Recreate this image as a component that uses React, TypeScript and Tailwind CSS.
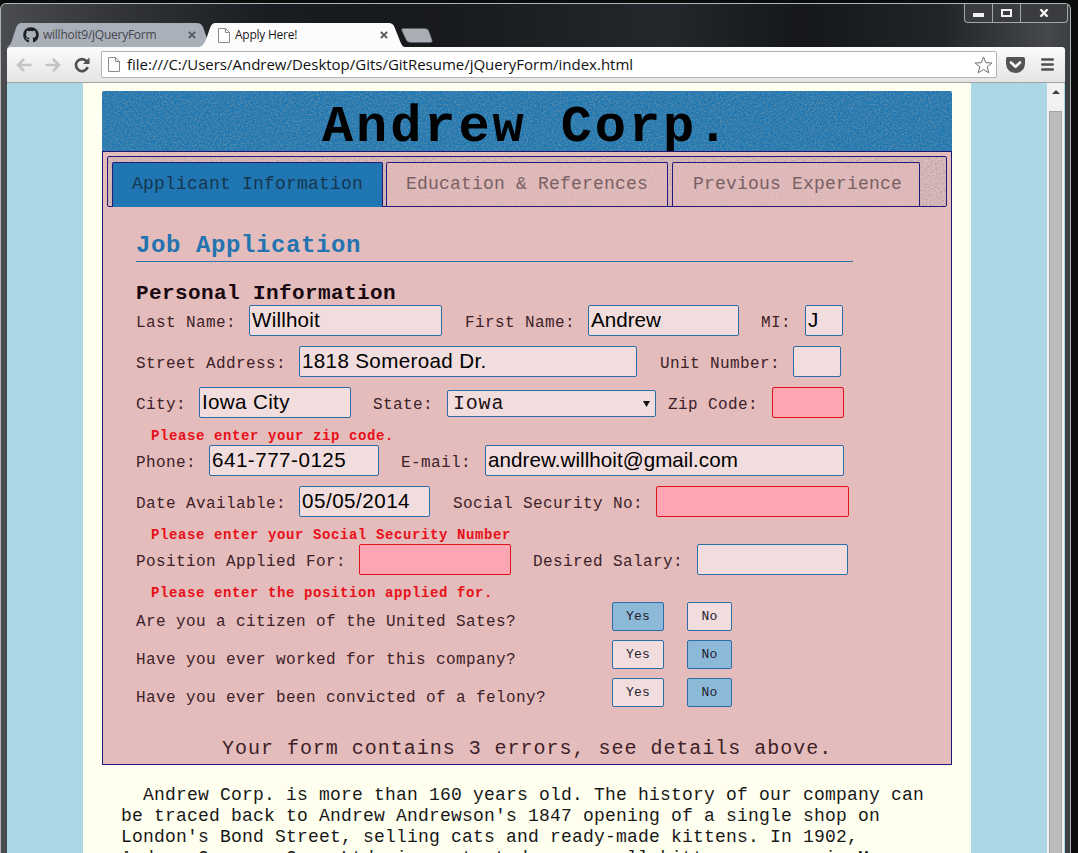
import React from "react";
import { FaGithub } from "react-icons/fa";

const mono = "font-['Liberation_Mono','Courier_New',monospace]";
const ui = "font-['Open_Sans','Noto_Sans',sans-serif]";

function Grain({ id, tone, opacity }: { id: string; tone: string; opacity: number }) {
  return (
    <svg className="pointer-events-none absolute inset-0 h-full w-full" opacity={opacity}>
      <filter id={id} x="0" y="0" width="100%" height="100%">
        <feTurbulence type="fractalNoise" baseFrequency="0.6" numOctaves="3" />
        <feColorMatrix values={tone} />
      </filter>
      <rect width="100%" height="100%" filter={`url(#${id})`} />
    </svg>
  );
}

const grey = "0 0 0 0 0.36  0 0 0 0 0.36  0 0 0 0 0.36  2.2 0 0 0 -0.8";

function PageIcon() {
  return (
    <svg width="12" height="15" viewBox="0 0 12 15" fill="#fff" stroke="#8a8a8a">
      <path d="M.5.5h7l4 4v10H.5z" />
      <path d="M7.5.5v4h4" fill="none" />
    </svg>
  );
}

function Close() {
  return (
    <svg width="8" height="8" viewBox="0 0 8 8" stroke="#55585c" strokeWidth="1.9">
      <path d="M.8.8l6.4 6.4M7.2.8L.8 7.2" />
    </svg>
  );
}

function WindowButtons() {
  return (
    <div className="-mr-[3px] flex h-[19px] w-[104px] rounded-b-[4px] border border-t-0 border-[#a4a7aa] bg-[#3a3c40]">
      <div className="flex w-[28px] items-center justify-center border-r border-[#a4a7aa]">
        <div className="mt-[4px] h-[4px] w-[11px] bg-[#f2f2f2]" />
      </div>
      <div className="flex w-[28px] items-center justify-center border-r border-[#a4a7aa]">
        <div className="h-[8px] w-[11px] border-2 border-[#f2f2f2]" />
      </div>
      <div className="flex flex-1 items-center justify-center">
        <svg width="10" height="8" viewBox="0 0 11 9" stroke="#f4f4f4" strokeWidth="2.6">
          <path d="M1.5.3l8 8.4M9.5.3l-8 8.4" />
        </svg>
      </div>
    </div>
  );
}

function TitleBar() {
  return (
    <div className="flex h-[43px] justify-between">
      <div className="flex items-end">
        <div className="relative flex h-[24px] w-[200px] items-center pl-[17px]">
          <svg className="absolute inset-0" width="202" height="24" viewBox="0 0 202 24">
            <path d="M0 24C5 24 6 17 9 8C11 2 12 0 16 0H190C196 0 197 3 199 10L202 18V24Z" fill="#aab0ba" />
          </svg>
          <FaGithub className="relative shrink-0 text-[16px] text-[#1d2024]" />
          <span className={`relative ml-[4px] whitespace-nowrap text-[12px] tracking-[-0.25px] text-[#44474c] ${ui}`}>willhoit9/jQueryForm</span>
          <span className="relative ml-auto mr-[10px]"><Close /></span>
        </div>
        <div className="relative flex h-[24px] w-[200px] items-center pl-[12px]">
          <svg className="absolute inset-0" width="200" height="24" viewBox="0 0 200 24" overflow="visible">
            <path d="M-7 24C-1 23 0 16 3 8C5 2 6 0 10 0H182C187 0 188 2 190 8L194 18C196 23 197 24 200 24Z" fill="#fcfcfc" />
          </svg>
          <span className="relative flex"><PageIcon /></span>
          <span className={`relative ml-[5px] whitespace-nowrap text-[12px] tracking-[-0.25px] text-[#181818] ${ui}`}>Apply Here!</span>
          <span className="relative ml-auto mr-[18px]"><Close /></span>
        </div>
        <svg className="mb-[4px] ml-[-5px]" width="32" height="15" viewBox="0 0 32 15">
          <path d="M2 .5h22q3 0 4 3l3 8.500q1 2.500-2 2.500H10q-4 0-5-3L1 3Q0 .5 2 .5z" fill="#a9aeb5" stroke="#5b5f66" strokeWidth=".6" />
        </svg>
      </div>
      <WindowButtons />
    </div>
  );
}

function Toolbar() {
  return (
    <div className="flex h-[36px] items-center rounded-t-[3px] border-b border-[#a3a3a3] bg-linear-to-b from-[#fbfbfb] to-[#e4e4e4] pl-[9px]">
      <svg width="16" height="14" viewBox="0 0 16 14" fill="none" stroke="#c3c3c3" strokeWidth="2.5">
        <path d="M15.500 7H2M8 1L2 7l6 6" />
      </svg>
      <svg className="ml-[13px]" width="16" height="14" viewBox="0 0 16 14" fill="none" stroke="#c3c3c3" strokeWidth="2.5">
        <path d="M.5 7H14M8 1l6 6-6 6" />
      </svg>
      <svg className="ml-[13px]" width="16" height="16" viewBox="0 0 16 16">
        <path d="M12.600 4.200A6 6 0 1 0 13.700 10" fill="none" stroke="#505050" strokeWidth="2.700" />
        <path d="M15.500.5V7H9z" fill="#505050" />
      </svg>
      <div className="ml-[11px] flex h-[27px] w-[896px] items-center rounded-[2px] border border-[#b3b3b3] bg-white pl-[6px]">
        <PageIcon />
        <span className={`ml-[7px] whitespace-nowrap text-[15px] tracking-[-0.01px] text-[#111] ${ui}`}>file:///C:/Users/Andrew/Desktop/Gits/GitResume/jQueryForm/index.html</span>
        <svg className="ml-auto mr-[3px]" width="19" height="18" viewBox="0 0 19 18" fill="#fff" stroke="#707070" strokeLinejoin="round">
          <path d="M9.500 1l2.300 5.700 6.100.3-4.700 3.900 1.600 6-5.300-3.400-5.300 3.400 1.600-6L1.100 7l6.100-.3z" />
        </svg>
      </div>
      <svg className="ml-[9px]" width="19" height="16" viewBox="0 0 19 16">
        <path d="M1.500 0h16Q19 0 19 1.500V7Q18 15.500 9.500 16 1 15.500 0 7V1.500Q0 0 1.500 0z" fill="#545454" />
        <path d="M5 5.500l4.500 4.300L14 5.500" fill="none" stroke="#f4f4f4" strokeWidth="2.600" strokeLinecap="round" strokeLinejoin="round" />
      </svg>
      <svg className="ml-[16px]" width="13" height="13" viewBox="0 0 13 13" stroke="#505050" strokeWidth="2.600" strokeLinecap="round">
        <path d="M1.300 1.500h10.400M1.300 6.500h10.400M1.300 11.500h10.400" />
      </svg>
    </div>
  );
}

function Label({ className, children }: { className: string; children: React.ReactNode }) {
  return <div className={`shrink-0 whitespace-pre pt-[4px] text-[16px] leading-[28px] tracking-[0.4px] text-[#3d2229] ${className}`}>{children}</div>;
}

function Field({ className, value, error }: { className: string; value?: string; error?: boolean }) {
  return (
    <div
      className={`h-[31px] shrink-0 whitespace-nowrap rounded-[2px] border pl-[2px] font-['Liberation_Sans',Arial,sans-serif] text-[20.6px] leading-[28px] text-black ${
        error ? "border-[#e0141e] bg-[#ffa6b4]" : "border-[#2c6ca8] bg-[#f1dddd]"
      } ${className}`}
    >
      {value}
    </div>
  );
}

function ErrorNote({ children }: { children: React.ReactNode }) {
  return <div className="h-[27px] pl-[15px] pt-[9px] text-[14px] font-bold leading-[18px] tracking-[0.6px] text-[#e81018]">{children}</div>;
}

function Choice({ className, on, children }: { className: string; on: boolean; children: string }) {
  return (
    <div className={`h-[29px] rounded-[2px] border border-[#2c6ca8] text-center text-[13px] leading-[27px] tracking-[0.2px] text-[#23202c] ${on ? "bg-[#8cb9d8]" : "bg-[#f1dddd]"} ${className}`}>
      {children}
    </div>
  );
}

function Question({ text, yes }: { text: string; yes: boolean }) {
  return (
    <div className="mb-[9px] flex">
      <div className="h-[29px] w-[476px] whitespace-nowrap pt-[6px] text-[16px] leading-[28px] tracking-[0.4px] text-[#3d2229]">{text}</div>
      <Choice className="w-[52px]" on={yes}>Yes</Choice>
      <Choice className="ml-[23px] w-[45px]" on={!yes}>No</Choice>
    </div>
  );
}

function TabButton({ className, active, children }: { className: string; active?: boolean; children: string }) {
  return (
    <div className={`relative rounded-t-[2px] border border-b-0 border-[#241a7c] text-[18px] leading-[42px] tracking-[0.2px] whitespace-nowrap ${active ? "h-[45px] bg-[#2076b2] text-[#16364f]" : "h-[44px] bg-[#e5bbbc]/65 text-[#796064]"} ${className}`}>
      {children}
    </div>
  );
}

function FormCard() {
  return (
    <div className="h-[614px] border border-[#1c1873] bg-[#e4bcbc] px-[4px] pt-[4px]">
      <div className="relative flex h-[51px] rounded-[2px] border border-[#241a7c] bg-[#e2babb] pl-[4px] pt-[5px]">
        <Grain id="tabs-grain" tone={grey} opacity={0.75} />
        <TabButton className="w-[271px] pl-[19px]" active>Applicant Information</TabButton>
        <TabButton className="ml-[3px] w-[282px] pl-[19px]">Education &amp; References</TabButton>
        <TabButton className="ml-[4px] w-[248px] pl-[20px]">Previous Experience</TabButton>
      </div>
      <div className="pl-[29px]">
        <h2 className="mt-[24px] h-[31px] w-[717px] border-b border-[#2b74ae] text-[24px] font-bold leading-[29px] tracking-[0.6px] text-[#2273b0]">Job Application</h2>
        <h3 className="mt-[19px] h-[24px] text-[21px] font-bold leading-[26px] tracking-[0.4px] text-[#180810]">Personal Information</h3>
        <div className="flex h-[41px]">
          <Label className="w-[113px]">Last Name:</Label>
          <Field className="w-[193px] tracking-[0.2px]" value="Willhoit" />
          <Label className="ml-[23px] w-[123px]">First Name:</Label>
          <Field className="w-[151px]" value="Andrew" />
          <Label className="ml-[22px] w-[44px]">MI:</Label>
          <Field className="w-[38px]" value="J" />
        </div>
        <div className="flex h-[41px]">
          <Label className="w-[163px]">Street Address:</Label>
          <Field className="w-[338px] tracking-[0.35px]" value="1818 Someroad Dr." />
          <Label className="ml-[23px] w-[133px]">Unit Number:</Label>
          <Field className="w-[48px]" />
        </div>
        <div className="flex h-[31px]">
          <Label className="w-[63px]">City:</Label>
          <Field className="w-[152px] tracking-[0.35px]" value="Iowa City" />
          <Label className="ml-[22px] w-[74px]">State:</Label>
          <div className="mt-[3px] flex h-[27px] w-[209px] items-center justify-between rounded-[2px] border border-[#2c6ca8] bg-[#f1dddd] pl-[5px] pr-[5px] text-[20px] tracking-[0.8px] text-[#1c1015]">
            <span>Iowa</span>
            <svg width="7" height="6" viewBox="0 0 7 6"><path d="M0 0h7L3.500 6z" fill="#111" /></svg>
          </div>
          <Label className="ml-[12px] w-[104px]">Zip Code:</Label>
          <Field className="w-[72px]" error />
        </div>
        <ErrorNote>Please enter your zip code.</ErrorNote>
        <div className="flex h-[41px]">
          <Label className="w-[73px]">Phone:</Label>
          <Field className="w-[170px] tracking-[0.5px]" value="641-777-0125" />
          <Label className="ml-[22px] w-[84px]">E-mail:</Label>
          <Field className="w-[359px] tracking-[0.05px]" value="andrew.willhoit@gmail.com" />
        </div>
        <div className="flex h-[31px]">
          <Label className="w-[163px]">Date Available:</Label>
          <Field className="w-[131px] tracking-[0.5px]" value="05/05/2014" />
          <Label className="ml-[23px] w-[203px]">Social Security No:</Label>
          <Field className="w-[193px]" error />
        </div>
        <ErrorNote>Please enter your Social Security Number</ErrorNote>
        <div className="flex h-[31px]">
          <Label className="w-[223px]">Position Applied For:</Label>
          <Field className="w-[152px]" error />
          <Label className="ml-[22px] w-[164px]">Desired Salary:</Label>
          <Field className="w-[151px]" />
        </div>
        <ErrorNote>Please enter the position applied for.</ErrorNote>
        <Question text="Are you a citizen of the United Sates?" yes />
        <Question text="Have you ever worked for this company?" yes={false} />
        <Question text="Have you ever been convicted of a felony?" yes={false} />
        <div className="mt-[30px] whitespace-nowrap pl-[86px] text-[20px] leading-[24px] tracking-[0.98px] text-[#3d2229]">Your form contains 3 errors, see details above.</div>
      </div>
    </div>
  );
}

function Page() {
  return (
    <div className={`flex h-[771px] overflow-hidden bg-[#acd8e6] ${mono}`}>
      <div className="ml-[76px] w-[888px] shrink-0 bg-[#fffff0] px-[19px] pt-[8px]">
        <div className="relative h-[60px] overflow-hidden rounded-t-[2px] bg-[#1c77b3]">
          <Grain id="header-grain" tone={grey} opacity={0.5} />
          <h1 className="relative whitespace-nowrap pl-[220px] text-[52px] font-bold leading-[74px] tracking-[2.9px] text-black">Andrew Corp.</h1>
        </div>
        <FormCard />
        <p className="mt-[20px] whitespace-pre pl-[19px] text-[18px] leading-[21px] tracking-[0.2px] text-[#171717]">
          <span className="pl-[22px]">Andrew Corp. is more than 160 years old. The history of our company can</span>
          {"\nbe traced back to Andrew Andrewson's 1847 opening of a single shop on\nLondon's Bond Street, selling cats and ready-made kittens. In 1902,\nAndrew Company Corp Ltd. inc. started as a small kitten company in May."}
        </p>
      </div>
      <div className="ml-[76px] flex w-[17px] flex-col items-center bg-[#f1f1f1]">
        <svg className="mt-[7px]" width="8" height="4" viewBox="0 0 8 4"><path d="M4 0l4 4H0z" fill="#404040" /></svg>
        <div className="mt-[17px] w-[13px] flex-1 border border-b-0 border-[#a5a5a5] bg-[#bcbcbc]" />
      </div>
    </div>
  );
}

export default function App() {
  return (
    <div className="h-[853px] w-[1078px] overflow-hidden bg-[#0b0c0c] pt-[3px]">
      <div className="h-[850px] w-[1071px] rounded-t-[6px] border border-b-0 border-[#b0b3b5] bg-[linear-gradient(90deg,#4a4c4f_0%,#303236_12%,#191c20_25%,#17191c_40%,#24272b_62%,#15171a_75%,#222528_88%,#46484b_98%,#3c3f41_100%)] pl-[5px]">
        <div className="w-[1059px]">
          <TitleBar />
          <div className="pl-px">
            <Toolbar />
            <Page />
          </div>
        </div>
      </div>
    </div>
  );
}
